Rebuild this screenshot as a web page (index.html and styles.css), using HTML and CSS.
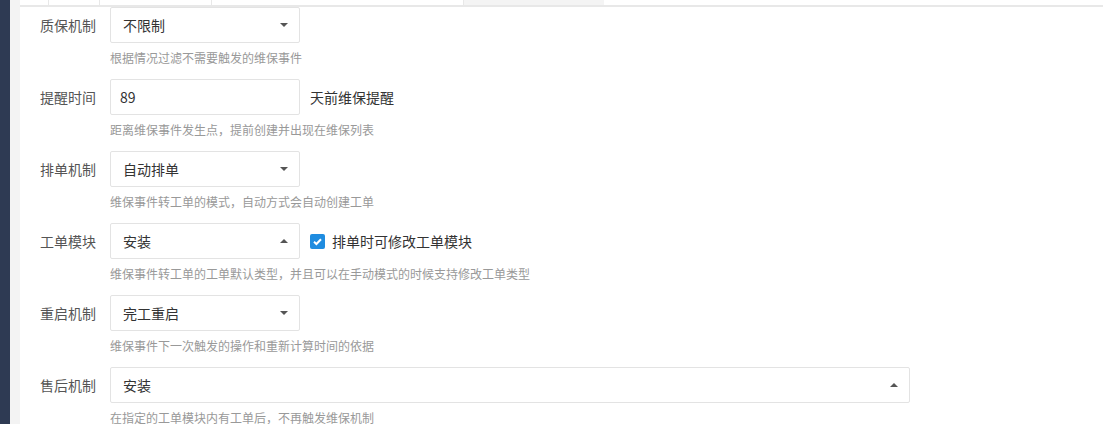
FILE: index.html
```html
<!DOCTYPE html>
<html lang="zh">
<head>
	<title>维保设置</title>
	<meta charset="utf-8">
	<link rel="stylesheet" href="styles.css">
</head>
<body>
	<div class="sidebar"></div>
	<div class="gutter"></div>
	<div id="main">
		<div class="tabs">
			<div class="tab t1"></div>
			<div class="tab t2"></div>
			<div class="tab t3"></div>
			<div class="tab t4"></div>
			<div class="tab t5 active"></div>
		</div>
		<div class="form">
			<div class="row">
				<label>质保机制</label>
				<div class="select"><span>不限制</span><i class="caret"></i></div>
			</div>
			<p class="help">根据情况过滤不需要触发的维保事件</p>

			<div class="row">
				<label>提醒时间</label>
				<div class="input">89</div>
				<span class="suffix">天前维保提醒</span>
			</div>
			<p class="help">距离维保事件发生点，提前创建并出现在维保列表</p>

			<div class="row">
				<label>排单机制</label>
				<div class="select"><span>自动排单</span><i class="caret"></i></div>
			</div>
			<p class="help">维保事件转工单的模式，自动方式会自动创建工单</p>

			<div class="row">
				<label>工单模块</label>
				<div class="select"><span>安装</span><i class="caret up"></i></div>
				<span class="check">
					<svg width="15" height="15" viewBox="0 0 15 15"><rect width="15" height="15" rx="2" fill="#1f8ce0"/><path d="M4 7.8 L6.4 10 L11 5.2" fill="none" stroke="#fff" stroke-width="2"/></svg>
					排单时可修改工单模块
				</span>
			</div>
			<p class="help">维保事件转工单的工单默认类型，并且可以在手动模式的时候支持修改工单类型</p>

			<div class="row">
				<label>重启机制</label>
				<div class="select"><span>完工重启</span><i class="caret"></i></div>
			</div>
			<p class="help">维保事件下一次触发的操作和重新计算时间的依据</p>

			<div class="row">
				<label>售后机制</label>
				<div class="select wide"><span>安装</span><i class="caret up"></i></div>
			</div>
			<p class="help">在指定的工单模块内有工单后，不再触发维保机制</p>
		</div>
	</div>
</body>
</html>
```

FILE: styles.css
```css
body {
	margin: 0;
	display: flex;
	height: 424px;
	overflow: hidden;
	font-family: "Noto Sans CJK SC", "Liberation Sans", sans-serif;
	font-size: 14px;
	color: #333;
	background: #fff;
}

.sidebar {
	width: 10px;
	background: #2e3a53;
}

.gutter {
	width: 10px;
	background: #f3f3f3;
}

#main {
	flex: 1;
	display: flex;
	flex-direction: column;
}

.tabs {
	flex: none;
	display: flex;
	height: 5px;
	border-bottom: 2px solid #e8e8e8;
}

.tab {
	border-right: 1px solid #e8e8e8;
}
.t1 { width: 28px; }
.t2 { width: 50px; }
.t3 { width: 111px; }
.t4 { width: 251px; }
.t5 { width: 140px; }
.tab.active {
	background: #f4f4f4;
	border-right: none;
}

.form {
	flex: none;
}

.row {
	display: flex;
	align-items: center;
	height: 36px;
}

.row label {
	width: 76px;
	padding-right: 14px;
	text-align: right;
	color: #555;
}

.select, .input {
	box-sizing: border-box;
	width: 190px;
	height: 36px;
	border: 1px solid #e3e3e3;
	border-radius: 2px;
	display: flex;
	align-items: center;
}

.select {
	justify-content: space-between;
	padding: 0 11px 0 12px;
}

.select.wide {
	width: 800px;
}

.input {
	padding: 0 9px;
}

.caret {
	width: 0;
	height: 0;
	border-left: 4px solid transparent;
	border-right: 4px solid transparent;
	border-top: 4px solid #555;
}
.caret.up {
	border-top: none;
	border-bottom: 4px solid #555;
}

.suffix {
	margin-left: 10px;
}

.check {
	margin-left: 10px;
	display: flex;
	align-items: center;
	gap: 7px;
}

.help {
	margin: 5px 0 11px 90px;
	font-size: 12px;
	line-height: 20px;
	color: #999;
}
```
